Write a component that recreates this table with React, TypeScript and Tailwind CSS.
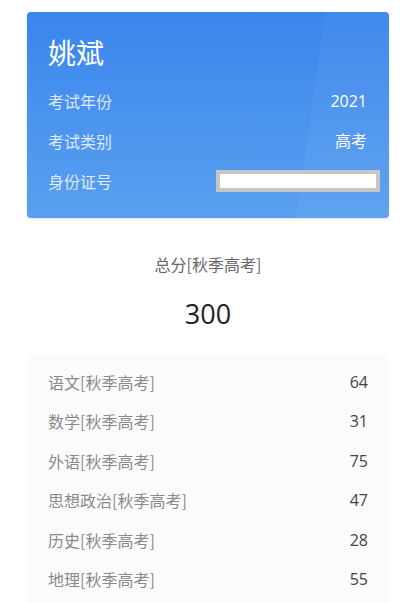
import React from 'react';

const SCORES = [
  { subject: '语文', score: 64 },
  { subject: '数学', score: 31 },
  { subject: '外语', score: 75 },
  { subject: '思想政治', score: 47 },
  { subject: '历史', score: 28 },
  { subject: '地理', score: 55 },
];

const CJK = "font-['Noto_Sans_CJK_SC','Noto_Sans',sans-serif]";

export default function App() {
  return (
    <div className={`min-h-[603px] bg-white pl-[27px] pr-[17px] pt-[12px] ${CJK}`}>
      {/* Candidate card */}
      <div className="relative h-[206px] overflow-hidden rounded-[4px] bg-gradient-to-b from-[#3a85ec] to-[#5aa0f0] pl-[21px] pr-[22px] pt-[25px] shadow-[0_1px_3px_rgba(0,0,0,0.12)]">
        <div className="absolute -right-[40px] -top-[30px] h-[300px] w-[120px] rotate-[8deg] bg-white/[0.04]" />
        <div className="relative">
          <h1 className="text-[28px] leading-[30px] text-white">姚斌</h1>
          <div className="mt-[24px] flex flex-col gap-[20px]">
            <Row label="考试年份" value="2021" />
            <Row label="考试类别" value="高考" />
            <div className="flex h-[20px] items-center justify-between">
              <span className="text-[16px] text-white/80">身份证号</span>
              <div className="-mr-[13px] h-[22px] w-[164px] shrink-0 border-[4px] border-[#c6c6c6] bg-white" />
            </div>
          </div>
        </div>
      </div>

      {/* Total */}
      <div className="mt-[36px] flex flex-col items-center">
        <p className="text-[16px] leading-[20px] text-[#666]">总分[秋季高考]</p>
        <p className="mt-[25px] font-['Open_Sans',sans-serif] text-[27px] leading-[30px] text-[#222]">300</p>
      </div>

      {/* Subjects */}
      <div className="mt-[25px] bg-[#fbfbfb] px-[21px] pt-[8px] pb-[10px]">
        {SCORES.map((s) => (
          <div key={s.subject} className="flex h-[39.5px] items-center justify-between">
            <span className="text-[16px] text-[#8a8a8a]">{s.subject}[秋季高考]</span>
            <span className="font-['Open_Sans',sans-serif] text-[16px] text-[#444]">{s.score}</span>
          </div>
        ))}
      </div>
    </div>
  );
}

function Row({ label, value }: { label: string; value: string }) {
  return (
    <div className="flex h-[20px] items-center justify-between">
      <span className="text-[16px] text-white/80">{label}</span>
      <span className="font-['Open_Sans','Noto_Sans_CJK_SC',sans-serif] text-[16px] text-white">{value}</span>
    </div>
  );
}
